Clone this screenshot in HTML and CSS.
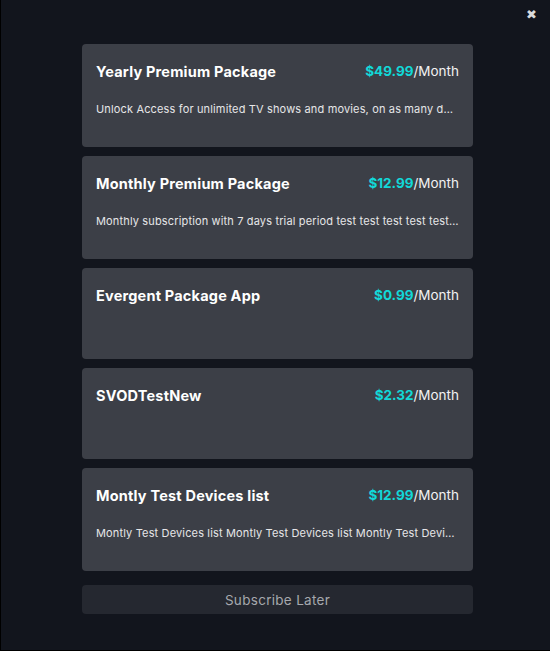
FILE: index.html
```html
<!DOCTYPE html>
<html>
<head>
<meta charset="utf-8">
<link rel="stylesheet" href="styles.css">
</head>
<body>
<div class="screen">
  <button class="close" aria-label="close">✖</button>
  <div class="list">
    <div class="card">
      <div class="row"><span class="title">Yearly Premium Package</span><span class="price"><b>$49.99</b>/Month</span></div>
      <div class="desc">Unlock Access for unlimited TV shows and movies, on as many devices as you want, anytime anywhere</div>
    </div>
    <div class="card">
      <div class="row"><span class="title">Monthly Premium Package</span><span class="price"><b>$12.99</b>/Month</span></div>
      <div class="desc">Monthly subscription with 7 days trial period test test test test test test test</div>
    </div>
    <div class="card">
      <div class="row"><span class="title">Evergent Package App</span><span class="price"><b>$0.99</b>/Month</span></div>
      <div class="desc"></div>
    </div>
    <div class="card">
      <div class="row"><span class="title">SVODTestNew</span><span class="price"><b>$2.32</b>/Month</span></div>
      <div class="desc"></div>
    </div>
    <div class="card">
      <div class="row"><span class="title">Montly Test Devices list</span><span class="price"><b>$12.99</b>/Month</span></div>
      <div class="desc">Montly Test Devices list Montly Test Devices list Montly Test Devices list</div>
    </div>
    <button class="later">Subscribe Later</button>
  </div>
</div>
</body>
</html>
```
FILE: styles.css
```css
html, body {
  margin: 0;
  padding: 0;
  background: #000;
}
.screen {
  width: 549px;
  height: 650px;
  margin-left: 1px;
  background: #12151d;
  position: relative;
  font-family: Inter, "Noto Sans", sans-serif;
  box-sizing: border-box;
  padding-top: 44px;
}
.close {
  position: absolute;
  top: 8px;
  right: 13px;
  background: none;
  border: 0;
  padding: 0;
  color: #d9dadc;
  font-size: 13px;
  font-family: "DejaVu Sans", sans-serif;
  line-height: 14px;
}
.list {
  width: 391px;
  margin-left: 81px;
  display: flex;
  flex-direction: column;
  gap: 9px;
}
.card {
  background: #3c3f47;
  border-radius: 4px;
  padding: 18px 14px 32px;
}
.row {
  display: flex;
  justify-content: space-between;
  align-items: center;
  height: 18px;
}
.title {
  color: #fff;
  font-weight: 700;
  font-size: 14.5px;
  letter-spacing: 0.2px;
}
.price {
  color: #f2f2f2;
  font-size: 13.5px;
  letter-spacing: 0;
}
.price b {
  color: #12d8d8;
  font-weight: 700;
}
.desc {
  margin-top: 23px;
  line-height: 12px;
  color: #e6e6e8;
  font-size: 11px;
  letter-spacing: 0.15px;
  white-space: nowrap;
  overflow: hidden;
  text-overflow: ellipsis;
}
.later {
  margin-top: 5px;
  height: 29px;
  background: #252830;
  border: 0;
  border-radius: 4px;
  color: #a6a8ad;
  font-family: Inter, "Noto Sans", sans-serif;
  font-size: 13.5px;
  letter-spacing: 0.3px;
}
```
